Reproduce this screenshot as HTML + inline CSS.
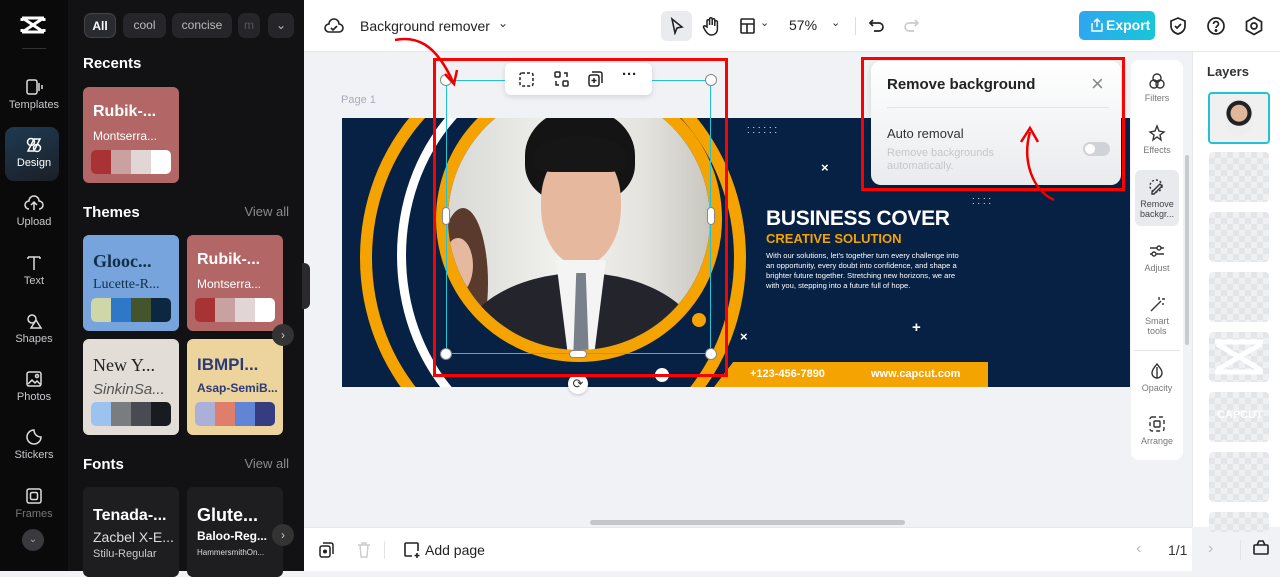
<!DOCTYPE html>
<html><head><meta charset="utf-8"><style>
*{box-sizing:border-box;margin:0;padding:0}
body{width:1280px;height:571px;overflow:hidden;position:relative;font-family:"Liberation Sans",sans-serif;background:#f0f2f5}
.a{position:absolute}
.rail{left:0;top:0;width:68px;height:571px;background:#0a0a0b}
.ri{position:absolute;left:0;width:68px;text-align:center;color:#c8c8cc;font-size:11px}
.ri svg{display:block;margin:0 auto 3px}
.panel{left:68px;top:0;width:236px;height:571px;background:#121214}
.chip{position:absolute;top:13px;height:25px;border-radius:7px;background:#26262a;color:#bbb;font-size:12px;line-height:25px;text-align:center}
.h{position:absolute;color:#fff;font-weight:bold;font-size:15px}
.va{position:absolute;color:#8a8a8f;font-size:13px;right:15px}
.card{position:absolute;width:96px;height:96px;border-radius:6px;overflow:hidden}
.card b{position:absolute;left:10px;top:16px;font-size:16px;white-space:nowrap}
.card i{position:absolute;left:10px;top:42px;font-size:12px;font-style:normal;white-space:nowrap}
.sw{position:absolute;left:8px;top:63px;width:80px;height:24px;border-radius:5px;overflow:hidden;display:flex}
.sw span{flex:1}
.top{left:304px;top:0;width:976px;height:52px;background:#fff;border-bottom:1px solid #e6e8eb}
.bot{left:304px;top:527px;width:888px;height:44px;background:#fff;border-top:1px solid #e6e8eb}
.rp{left:1192px;top:52px;width:88px;height:475px;background:#fff;border-left:1px solid #e6e8eb}
.lay{position:absolute;left:16px;width:60px;height:50px;border-radius:4px;background:repeating-conic-gradient(#e3e5e8 0 25%,#eef0f2 0 50%) 0 0/12px 12px}
.tc{left:1131px;top:60px;width:52px;height:400px;background:#fff;border-radius:8px}
.ti{position:absolute;left:0;width:52px;text-align:center;font-size:9px;color:#777;line-height:10px}
.ti svg{display:block;margin:0 auto 3px}
</style></head><body>
<div class="a rail">
 <svg class="a" style="left:20px;top:15px" width="26" height="20" viewBox="0 0 26 20"><path d="M2 3h22M2 17h22M2 3v3M24 3v3M2 17v-3M24 17v-3M4 4l18 12M22 4L4 16" stroke="#fff" stroke-width="3" fill="none"/></svg>
 <div class="a" style="left:22px;top:48px;width:24px;height:1px;background:#333"></div>
 <div class="ri" style="top:78px"><svg width="18" height="18" viewBox="0 0 18 18" fill="none" stroke="#ddd" stroke-width="1.5"><rect x="2" y="2" width="10" height="14" rx="2"/><path d="M14 5v8M17 7v4"/></svg>Templates</div>
 <div class="a" style="left:5px;top:127px;width:54px;height:54px;border-radius:9px;background:linear-gradient(160deg,#1e3a52,#1b1f26)"></div>
 <div class="ri" style="top:136px;color:#fff"><svg width="18" height="18" viewBox="0 0 18 18" fill="none" stroke="#fff" stroke-width="1.5"><circle cx="6" cy="6" r="3.5"/><circle cx="12" cy="12" r="3.5"/><path d="M9 3l6 0-6 12H3z"/></svg>Design</div>
 <div class="ri" style="top:195px"><svg width="20" height="18" viewBox="0 0 20 18" fill="none" stroke="#ddd" stroke-width="1.5"><path d="M5 14a4 4 0 010-8 5 5 0 0110 0 4 4 0 010 8M10 15V8M7 10l3-3 3 3"/></svg>Upload</div>
 <div class="ri" style="top:254px"><svg width="18" height="18" viewBox="0 0 18 18" fill="none" stroke="#ddd" stroke-width="1.5"><path d="M3 3h12M9 3v13M3 3v2M15 3v2"/></svg>Text</div>
 <div class="ri" style="top:312px"><svg width="18" height="18" viewBox="0 0 18 18" fill="none" stroke="#ddd" stroke-width="1.5"><circle cx="7" cy="7" r="4"/><path d="M11 8l5 8H6z"/></svg>Shapes</div>
 <div class="ri" style="top:370px"><svg width="18" height="18" viewBox="0 0 18 18" fill="none" stroke="#ddd" stroke-width="1.5"><rect x="2" y="2" width="14" height="14" rx="2"/><path d="M3 14l4-4 3 3 2-2 4 4"/><circle cx="12" cy="6" r="1.5"/></svg>Photos</div>
 <div class="ri" style="top:428px"><svg width="18" height="18" viewBox="0 0 18 18" fill="none" stroke="#ddd" stroke-width="1.5"><path d="M16 9a7 7 0 11-7-7c0 4 3 7 7 7z"/></svg>Stickers</div>
 <div class="ri" style="top:487px;color:#777"><svg width="18" height="18" viewBox="0 0 18 18" fill="none" stroke="#ddd" stroke-width="1.5"><rect x="2" y="2" width="14" height="14" rx="2"/><rect x="5.5" y="5.5" width="7" height="7" rx="1.5"/></svg>Frames</div>
 <div class="a" style="left:22px;top:529px;width:22px;height:22px;border-radius:50%;background:#3a3a3e;color:#aaa;font-size:10px;text-align:center;line-height:22px">⌄</div>
</div>
<div class="a panel">
 <div class="chip" style="left:16px;width:32px;background:#2a2b30;color:#fff;border:1px solid #444;font-weight:bold">All</div>
 <div class="chip" style="left:55px;width:43px">cool</div>
 <div class="chip" style="left:104px;width:60px">concise</div>
 <div class="chip" style="left:170px;width:22px;color:#555">m</div>
 <div class="chip" style="left:200px;width:26px">⌄</div>
 <div class="h" style="left:15px;top:55px">Recents</div>
 <div class="card" style="left:15px;top:87px;background:#b26666"><b style="color:#fff">Rubik-...</b><i style="color:#fff">Montserra...</i><div class="sw"><span style="background:#a83234"></span><span style="background:#c9a1a1"></span><span style="background:#e2d5d5"></span><span style="background:#fff"></span></div></div>
 <div class="h" style="left:15px;top:204px">Themes</div><div class="va" style="top:204px">View all</div>
 <div class="card" style="left:15px;top:235px;background:#77a4dc"><b style="color:#10304a;font-family:'Liberation Serif',serif;font-size:18px">Glooc...</b><i style="color:#10304a;font-family:'Liberation Serif',serif;font-size:14px">Lucette-R...</i><div class="sw"><span style="background:#cfd6a8"></span><span style="background:#2f78c8"></span><span style="background:#44542c"></span><span style="background:#0c2740"></span></div></div>
 <div class="card" style="left:119px;top:235px;background:#b26666"><b style="color:#fff">Rubik-...</b><i style="color:#fff">Montserra...</i><div class="sw"><span style="background:#a83234"></span><span style="background:#c9a1a1"></span><span style="background:#e2d5d5"></span><span style="background:#fff"></span></div></div>
 <div class="card" style="left:15px;top:339px;background:#e2ddd6"><b style="color:#222;font-family:'Liberation Serif',serif;font-weight:normal;font-size:18px">New Y...</b><i style="color:#555;font-style:italic;font-size:15px">SinkinSa...</i><div class="sw"><span style="background:#9cc3ef"></span><span style="background:#7a7d80"></span><span style="background:#484c52"></span><span style="background:#181b1f"></span></div></div>
 <div class="card" style="left:119px;top:339px;background:#ecd49c"><b style="color:#2c3a7a;font-size:17px">IBMPl...</b><i style="color:#2c3a7a;font-weight:bold">Asap-SemiB...</i><div class="sw"><span style="background:#aab0d8"></span><span style="background:#e07e6c"></span><span style="background:#6284d4"></span><span style="background:#353d80"></span></div></div>
 <div class="a" style="left:204px;top:324px;width:22px;height:22px;border-radius:50%;background:#333;color:#ccc;font-size:12px;text-align:center;line-height:22px">›</div>
 <div class="h" style="left:15px;top:456px">Fonts</div><div class="va" style="top:456px">View all</div>
 <div class="card" style="left:15px;top:487px;background:#1e1e21;height:90px"><b style="color:#fff;top:20px">Tenada-...</b><i style="color:#ddd;top:42px;font-size:14px">Zacbel X-E...</i><i style="color:#ccc;top:61px;font-size:11px">Stilu-Regular</i></div>
 <div class="card" style="left:119px;top:487px;background:#1e1e21;height:90px"><b style="color:#fff;top:18px;font-size:18px">Glute...</b><i style="color:#fff;top:42px;font-weight:bold">Baloo-Reg...</i><i style="color:#ddd;top:61px;font-size:8px">HammersmithOn...</i></div>
 <div class="a" style="left:204px;top:524px;width:22px;height:22px;border-radius:50%;background:#333;color:#ccc;font-size:12px;text-align:center;line-height:22px">›</div>
</div>
<div class="a" style="left:302px;top:263px;width:8px;height:46px;background:#2a2a2e;border-radius:0 6px 6px 0"></div>

<div class="a top">
 <svg class="a" style="left:20px;top:17px" width="20" height="18" viewBox="0 0 20 18" fill="none" stroke="#222" stroke-width="1.6"><path d="M5 15a4 4 0 010-8 5 5 0 0110 0 4 4 0 010 8z"/><path d="M7 11l2 2 4-4"/></svg>
 <div class="a" style="left:56px;top:18px;font-size:14px;color:#222">Background remover</div>
 <div class="a" style="left:194px;top:16px;font-size:12px;color:#333">⌄</div>
 <div class="a" style="left:357px;top:11px;width:31px;height:30px;border-radius:6px;background:#e9ebee"></div>
 <svg class="a" style="left:365px;top:17px" width="16" height="18" viewBox="0 0 16 18" fill="none" stroke="#222" stroke-width="1.6"><path d="M3 2l10 8-5 1-2 5z"/></svg>
 <svg class="a" style="left:398px;top:16px" width="18" height="20" viewBox="0 0 18 20" fill="none" stroke="#222" stroke-width="1.5"><path d="M5 11V5a1.3 1.3 0 012.6 0v4V3a1.3 1.3 0 012.6 0v6V4a1.3 1.3 0 012.6 0v6V6a1.3 1.3 0 012.6 0v7c0 4-3 6-6 6s-5-2-7-6l-1-2a1.3 1.3 0 012-1z"/></svg>
 <svg class="a" style="left:435px;top:17px" width="18" height="18" viewBox="0 0 18 18" fill="none" stroke="#222" stroke-width="1.6"><rect x="2" y="2" width="13" height="14" rx="1"/><path d="M2 7h13M8 7v9"/></svg>
 <div class="a" style="left:456px;top:16px;font-size:11px;color:#333">⌄</div>
 <div class="a" style="left:485px;top:17px;font-size:14px;color:#222">57%</div>
 <div class="a" style="left:527px;top:16px;font-size:11px;color:#333">⌄</div>
 <div class="a" style="left:551px;top:17px;width:1px;height:18px;background:#ddd"></div>
 <svg class="a" style="left:564px;top:17px" width="18" height="18" viewBox="0 0 18 18" fill="none" stroke="#222" stroke-width="1.7"><path d="M5 3L2 6l3 3M2 6h9a4 4 0 010 8H6"/></svg>
 <svg class="a" style="left:598px;top:17px" width="18" height="18" viewBox="0 0 18 18" fill="none" stroke="#ccc" stroke-width="1.7"><path d="M13 3l3 3-3 3M16 6H7a4 4 0 000 8h5"/></svg>
 <div class="a" style="left:775px;top:11px;width:76px;height:29px;border-radius:5px;background:linear-gradient(90deg,#2fa6f0,#17c6d8);color:#fff;font-size:14px;font-weight:bold;line-height:29px;padding-left:27px">Export</div>
 <svg class="a" style="left:786px;top:18px" width="14" height="14" viewBox="0 0 14 14" fill="none" stroke="#fff" stroke-width="1.4"><path d="M3 6H2v7h10V6h-1M7 9V1M4 4l3-3 3 3"/></svg>
 <svg class="a" style="left:865px;top:16px" width="18" height="20" viewBox="0 0 18 20" fill="none" stroke="#222" stroke-width="1.7"><path d="M9 2l7 3v5c0 4-3 7-7 8-4-1-7-4-7-8V5z"/><path d="M6 10l2 2 4-4"/></svg>
 <svg class="a" style="left:902px;top:16px" width="20" height="20" viewBox="0 0 20 20" fill="none" stroke="#222" stroke-width="1.7"><circle cx="10" cy="10" r="8"/><path d="M7.5 8a2.5 2.5 0 115 0c0 2-2.5 2-2.5 4"/><circle cx="10" cy="14.5" r=".6" fill="#222"/></svg>
 <svg class="a" style="left:940px;top:16px" width="20" height="20" viewBox="0 0 20 20" fill="none" stroke="#222" stroke-width="1.7"><path d="M10 1.5l7.5 4.3v8.4L10 18.5l-7.5-4.3V5.8z"/><circle cx="10" cy="10" r="3"/></svg>
</div>

<!-- canvas -->
<div class="a" style="left:341px;top:94px;font-size:11px;color:#aab">Page 1</div>
<div class="a" style="left:342px;top:118px;width:788px;height:269px;background:#062144;overflow:hidden">
 <div class="a" style="left:18px;top:-70px;width:386px;height:420px;border-radius:50%;border:12px solid #f5a300"></div>
 <div class="a" style="left:55px;top:-60px;width:340px;height:395px;border-radius:50%;border:9px solid #fff;clip-path:inset(0 45% 0 0)"></div>
 <div class="a" style="left:94px;top:-42px;width:286px;height:286px;border-radius:50%;border:12px solid #f5a300"></div>
 <div class="a" style="left:106px;top:-30px;width:262px;height:262px;border-radius:50%;overflow:hidden;background:linear-gradient(90deg,#d8d8d4,#f2f2ef 45%,#e4e3de 75%,#c9c7c0)">
  <div class="a" style="left:-10px;top:120px;width:50px;height:150px;border-radius:50%;background:#5a3a2c"></div>
  <div class="a" style="left:-5px;top:150px;width:30px;height:55px;border-radius:50%;background:#e4b9a0"></div>
  <div class="a" style="left:77px;top:20px;width:110px;height:95px;border-radius:50% 50% 40% 40%;background:#141414"></div>
  <div class="a" style="left:93px;top:60px;width:80px;height:118px;border-radius:45% 45% 50% 50%;background:#e6b99e"></div>
  <div class="a" style="left:87px;top:48px;width:92px;height:36px;border-radius:50% 50% 20% 20%;background:#161616"></div>
  <div class="a" style="left:10px;top:185px;width:246px;height:160px;border-radius:50%;background:#24252c"></div>
  <div class="a" style="left:108px;top:172px;width:50px;height:100px;background:#f4f4f4;clip-path:polygon(0 0,100% 0,75% 100%,25% 100%)"></div>
  <div class="a" style="left:125px;top:185px;width:16px;height:90px;background:#7a7f8c;clip-path:polygon(20% 0,80% 0,100% 100%,0 100%)"></div>
 </div>
 <div class="a" style="left:350px;top:195px;width:14px;height:14px;border-radius:50%;background:#f5a300"></div>
 <div class="a" style="left:405px;top:5px;color:#fff;font-size:9px;letter-spacing:3px;line-height:5px">......<br>......</div>
 <div class="a" style="left:630px;top:76px;color:#fff;font-size:9px;letter-spacing:3px;line-height:5px">....<br>....</div>
 <div class="a" style="left:479px;top:42px;color:#fff;font-size:13px;font-weight:bold">×</div>
 <div class="a" style="left:398px;top:211px;color:#fff;font-size:13px;font-weight:bold">×</div>
 <div class="a" style="left:570px;top:201px;color:#fff;font-size:15px;font-weight:bold">+</div>
 <div class="a" style="left:424px;top:89px;color:#fff;font-size:21px;font-weight:bold;letter-spacing:-.3px">BUSINESS COVER</div>
 <div class="a" style="left:424px;top:113px;color:#f5a300;font-size:13px;font-weight:bold">CREATIVE SOLUTION</div>
 <div class="a" style="left:424px;top:133px;color:#fff;font-size:7.6px;line-height:10px;width:200px">With our solutions, let's together turn every challenge into an opportunity, every doubt into confidence, and shape a brighter future together. Stretching new horizons, we are with you, stepping into a future full of hope.</div>
 <div class="a" style="left:372px;top:244px;width:274px;height:25px;background:#f5a300;clip-path:polygon(7% 0,100% 0,100% 100%,0 100%)"></div>
 <div class="a" style="left:408px;top:250px;color:#fff;font-size:11px;font-weight:bold">+123-456-7890</div>
 <div class="a" style="left:529px;top:250px;color:#fff;font-size:11px;font-weight:bold">www.capcut.com</div>
 <div class="a" style="left:313px;top:250px;width:14px;height:14px;border-radius:50%;background:#fff"></div>
</div>
<!-- selection -->
<div class="a" style="left:446px;top:80px;width:265px;height:274px;border:1.5px solid #22c2d6"></div>
<div class="a" style="left:440px;top:74px;width:12px;height:12px;border-radius:50%;background:#fff;border:1px solid #888"></div>
<div class="a" style="left:705px;top:74px;width:12px;height:12px;border-radius:50%;background:#fff;border:1px solid #888"></div>
<div class="a" style="left:440px;top:348px;width:12px;height:12px;border-radius:50%;background:#fff;border:1px solid #888"></div>
<div class="a" style="left:705px;top:348px;width:12px;height:12px;border-radius:50%;background:#fff;border:1px solid #888"></div>
<div class="a" style="left:442px;top:207px;width:8px;height:18px;border-radius:4px;background:#fff;border:1px solid #888"></div>
<div class="a" style="left:707px;top:207px;width:8px;height:18px;border-radius:4px;background:#fff;border:1px solid #888"></div>
<div class="a" style="left:569px;top:350px;width:18px;height:8px;border-radius:4px;background:#fff;border:1px solid #888"></div>
<div class="a" style="left:568px;top:374px;width:20px;height:20px;border-radius:50%;background:#fff;color:#333;font-size:13px;text-align:center;line-height:20px;box-shadow:0 1px 3px #0003">⟳</div>
<div class="a" style="left:505px;top:63px;width:147px;height:32px;border-radius:6px;background:#fff;box-shadow:0 2px 6px #0002;font-size:13px;color:#222">
 <svg class="a" style="left:14px;top:9px" width="15" height="15" viewBox="0 0 15 15" fill="none" stroke="#222" stroke-width="1.5" stroke-dasharray="3 2"><rect x="1" y="1" width="13" height="13" rx="2"/></svg>
 <svg class="a" style="left:49px;top:8px" width="15" height="16" viewBox="0 0 15 16" fill="none" stroke="#222" stroke-width="1.5"><rect x="1" y="1" width="5" height="5" rx="1"/><rect x="9" y="10" width="5" height="5" rx="1"/><path d="M10 2h3v4M5 14H2v-4"/></svg>
 <svg class="a" style="left:83px;top:8px" width="15" height="16" viewBox="0 0 15 16" fill="none" stroke="#222" stroke-width="1.5"><rect x="1" y="4" width="10" height="11" rx="2"/><path d="M4 1h8a2 2 0 012 2v9M6 7v5M3.5 9.5h5"/></svg>
 <div class="a" style="left:117px;top:3px;font-weight:bold;font-size:15px">···</div>
</div>
<!-- red boxes -->
<div class="a" style="left:433px;top:58px;width:295px;height:319px;border:3px solid #f00"></div>
<svg class="a" style="left:390px;top:34px" width="80" height="60" viewBox="0 0 80 60" fill="none" stroke="#e00" stroke-width="2.5"><path d="M5 6c20-4 40 2 58 42"/><path d="M55 40l9 10 3-14"/></svg>

<!-- remove bg panel -->
<div class="a" style="left:871px;top:61px;width:250px;height:124px;border-radius:10px;background:linear-gradient(#fff,#e9ebee);box-shadow:0 2px 8px #0002">
 <div class="a" style="left:16px;top:15px;font-size:15px;font-weight:bold;color:#222">Remove background</div>
 <div class="a" style="left:220px;top:10px;font-size:22px;color:#888;font-weight:lighter">×</div>
 <div class="a" style="left:16px;top:46px;width:222px;height:1px;background:#e2e4e7"></div>
 <div class="a" style="left:16px;top:65px;font-size:13px;color:#333">Auto removal</div>
 <div class="a" style="left:16px;top:86px;font-size:11px;color:#c5c7ca;line-height:12.5px">Remove backgrounds<br>automatically.</div>
 <div class="a" style="left:212px;top:81px;width:27px;height:14px;border-radius:7px;background:#cfd2d6"><div class="a" style="left:2px;top:2px;width:10px;height:10px;border-radius:50%;background:#fff"></div></div>
</div>
<div class="a" style="left:861px;top:57px;width:264px;height:134px;border:3px solid #f00"></div>
<svg class="a" style="left:1012px;top:120px" width="50" height="82" viewBox="0 0 50 82" fill="none" stroke="#e00" stroke-width="2.5"><path d="M42 80C20 70 10 40 18 12"/><path d="M9 22L18 8l8 14"/></svg>

<!-- tool column -->
<div class="a tc">
 <div class="ti" style="top:12px"><svg width="18" height="18" viewBox="0 0 18 18" fill="none" stroke="#333" stroke-width="1.4"><circle cx="9" cy="6" r="4"/><circle cx="6" cy="12" r="4"/><circle cx="12" cy="12" r="4"/></svg>Filters</div>
 <div class="ti" style="top:64px"><svg width="18" height="18" viewBox="0 0 18 18" fill="none" stroke="#333" stroke-width="1.4"><path d="M9 2l2 5 5 1-4 3 1 5-4-3-4 3 1-5-4-3 5-1z"/></svg>Effects</div>
 <div class="a" style="left:4px;top:110px;width:44px;height:56px;border-radius:6px;background:#e8eaed"></div>
 <div class="ti" style="top:118px;color:#444"><svg width="18" height="18" viewBox="0 0 18 18" fill="none" stroke="#333" stroke-width="1.4"><path d="M4 14l8-8 2 2-8 8H4z" /><circle cx="8" cy="8" r="6" stroke-dasharray="2 2"/></svg>Remove<br>backgr...</div>
 <div class="ti" style="top:182px"><svg width="18" height="18" viewBox="0 0 18 18" fill="none" stroke="#333" stroke-width="1.4"><path d="M2 6h14M2 12h14"/><circle cx="11" cy="6" r="2" fill="#fff"/><circle cx="6" cy="12" r="2" fill="#fff"/></svg>Adjust</div>
 <div class="ti" style="top:235px"><svg width="18" height="18" viewBox="0 0 18 18" fill="none" stroke="#333" stroke-width="1.4"><path d="M3 16L13 6M11 2v3M14 4h3M15 8v2"/></svg>Smart<br>tools</div>
 <div class="a" style="left:3px;top:290px;width:46px;height:1px;background:#e3e5e8"></div>
 <div class="ti" style="top:302px"><svg width="18" height="18" viewBox="0 0 18 18" fill="none" stroke="#333" stroke-width="1.4"><path d="M9 2c3 4 5 6 5 9a5 5 0 01-10 0c0-3 2-5 5-9zM9 5v11"/></svg>Opacity</div>
 <div class="ti" style="top:355px"><svg width="18" height="18" viewBox="0 0 18 18" fill="none" stroke="#333" stroke-width="1.4"><rect x="2" y="2" width="14" height="14" rx="2" stroke-dasharray="4 3"/><rect x="6" y="6" width="6" height="6" rx="1"/></svg>Arrange</div>
</div>
<div class="a" style="left:1185px;top:155px;width:4px;height:190px;border-radius:2px;background:#c8cacd"></div>
<div class="a" style="left:590px;top:520px;width:315px;height:5px;border-radius:3px;background:#c4c6c9"></div>

<div class="a rp">
 <div class="a" style="left:14px;top:12px;font-size:13px;font-weight:bold;color:#333">Layers</div>
 <div class="lay" style="top:40px;left:15px;width:62px;height:52px;border:2px solid #22c2d6;background:#f0f0f0"><div class="a" style="left:14px;top:4px;width:30px;height:38px;border-radius:50%;background:radial-gradient(circle at 50% 40%,#e0b79a 30%,#222 32%,#222 45%,#eee 47%)"></div></div>
 <div class="lay" style="top:100px"></div>
 <div class="lay" style="top:160px"></div>
 <div class="lay" style="top:220px"></div>
 <div class="lay" style="top:280px"><svg class="a" style="left:2px;top:6px" width="56" height="38" viewBox="0 0 56 38" fill="none" stroke="#fff" stroke-width="5"><path d="M4 4h48M4 34h48M6 6l44 26M50 6L6 32"/></svg></div>
 <div class="lay" style="top:340px"><div class="a" style="left:8px;top:17px;color:#fff;font-size:11px;font-weight:bold">CAPCUT</div></div>
 <div class="lay" style="top:400px"></div>
 <div class="lay" style="top:460px;height:20px"></div>
</div>

<div class="a bot">
 <svg class="a" style="left:15px;top:14px" width="16" height="16" viewBox="0 0 16 16" fill="none" stroke="#222" stroke-width="1.5"><rect x="1" y="4" width="10" height="11" rx="2"/><path d="M4 1h8a2 2 0 012 2v9"/><circle cx="6" cy="9.5" r="1.3" fill="#222"/></svg>
 <svg class="a" style="left:53px;top:14px" width="14" height="16" viewBox="0 0 14 16" fill="none" stroke="#ccc" stroke-width="1.4"><path d="M1 3h12M5 3V1h4v2M3 3l1 12h6l1-12"/></svg>
 <div class="a" style="left:80px;top:13px;width:1px;height:18px;background:#e3e3e3"></div>
 <svg class="a" style="left:99px;top:13px" width="18" height="18" viewBox="0 0 18 18" fill="none" stroke="#222" stroke-width="1.6"><path d="M9 15H3a1 1 0 01-1-1V3a1 1 0 011-1h11a1 1 0 011 1v7M14 12v5M11.5 14.5h5"/></svg>
 <div class="a" style="left:121px;top:14px;font-size:14px;color:#222">Add page</div>
 <div class="a" style="left:832px;top:12px;font-size:16px;color:#bbb">‹</div>
 <div class="a" style="left:864px;top:14px;font-size:14px;color:#333">1/1</div>
 <div class="a" style="left:904px;top:12px;font-size:16px;color:#bbb">›</div>
 <div class="a" style="left:936px;top:12px;width:1px;height:20px;background:#e3e3e3"></div>
</div>
<svg class="a" style="left:1252px;top:538px" width="18" height="18" viewBox="0 0 18 18" fill="none" stroke="#222" stroke-width="1.6"><rect x="2" y="7" width="14" height="9" rx="1"/><path d="M5 7l2-4h4l2 4"/></svg>
</body></html>
